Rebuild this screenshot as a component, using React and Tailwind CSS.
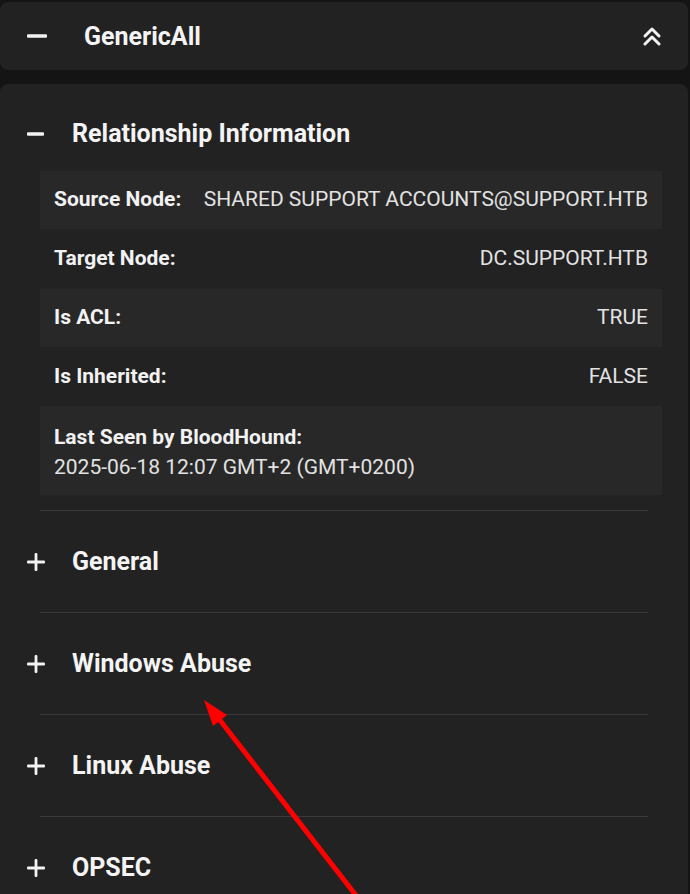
import React from 'react';

const Minus = ({ w = 20 }) => (
  <svg width={w} height="4" viewBox={`0 0 ${w} 4`} className="shrink-0">
    <rect x="0" y="0.3" width={w} height="3.4" rx="1" fill="#f2f2f2" />
  </svg>
);

const Plus = () => (
  <svg width="18" height="18" viewBox="0 0 18 18" className="shrink-0">
    <rect x="0" y="7.6" width="18" height="2.8" rx="1" fill="#f2f2f2" />
    <rect x="7.6" y="0" width="2.8" height="18" rx="1" fill="#f2f2f2" />
  </svg>
);

const ChevronsUp = () => (
  <svg width="20" height="20" viewBox="0 0 20 20" fill="none" className="shrink-0">
    <polyline points="3,10 10,3 17,10" stroke="#f2f2f2" strokeWidth="3" strokeLinecap="round" strokeLinejoin="round" />
    <polyline points="3,18 10,11 17,18" stroke="#f2f2f2" strokeWidth="3" strokeLinecap="round" strokeLinejoin="round" />
  </svg>
);

const rows = [
  { label: 'Source Node:', value: 'SHARED SUPPORT ACCOUNTS@SUPPORT.HTB', h: 'h-[58px]', shade: true },
  { label: 'Target Node:', value: 'DC.SUPPORT.HTB', h: 'h-[60px]', shade: false },
  { label: 'Is ACL:', value: 'TRUE', h: 'h-[58px]', shade: true },
  { label: 'Is Inherited:', value: 'FALSE', h: 'h-[59px]', shade: false },
];

const sections = ['General', 'Windows Abuse', 'Linux Abuse', 'OPSEC'];

const App = () => {
  return (
    <div className="relative min-h-[894px] overflow-hidden bg-[#141414] pt-[2px] pr-[2px] font-['Roboto',sans-serif] text-[#e8e8e8]">
      {/* edge title */}
      <div className="flex h-[68px] items-center rounded-lg bg-[#222222] pl-[27px] pr-[26px]">
        <Minus w={20} />
        <span className="ml-[37px] text-[25px] font-bold leading-none text-[#f4f4f4]">GenericAll</span>
        <div className="ml-auto">
          <ChevronsUp />
        </div>
      </div>

      <div className="mt-[14px] rounded-lg bg-[#222222] pb-[40px]">
        <div className="flex items-center pl-[27px] pt-[36px] pb-[23px] leading-[28px]">
          <Minus w={17} />
          <span className="ml-[28px] text-[25px] font-bold text-[#f4f4f4]">Relationship Information</span>
        </div>

        <div className="ml-[40px] mr-[26px] text-[21px]">
          {rows.map(r => (
            <div key={r.label} className={`flex items-center justify-between px-[14px] ${r.h} ${r.shade ? 'bg-[#282828]' : ''}`}>
              <span className="font-bold text-[#f2f2f2]">{r.label}</span>
              <span className="text-[#e2e2e2]">{r.value}</span>
            </div>
          ))}
          <div className="bg-[#282828] px-[14px] pt-[16px] pb-[13px] leading-[30px]">
            <div className="font-bold text-[#f2f2f2]">Last Seen by BloodHound:</div>
            <div className="text-[#e2e2e2]">2025-06-18 12:07 GMT+2 (GMT+0200)</div>
          </div>
        </div>

        <div className="mt-[15px]">
          {sections.map(s => (
            <div key={s}>
              <div className="mx-[40px] h-px bg-[#3a3a3a]" />
              <div className="flex h-[101px] items-center pl-[27px]">
                <Plus />
                <span className="ml-[27px] text-[25px] font-bold text-[#f4f4f4]">{s}</span>
              </div>
            </div>
          ))}
        </div>
      </div>

      {/* red annotation arrow */}
      <svg className="pointer-events-none absolute left-0 top-0" width="690" height="894" viewBox="0 0 690 894">
        <line x1="219" y1="719" x2="358" y2="898" stroke="#ff0000" strokeWidth="5" />
        <polygon points="204,700 213,726 227,715" fill="#ff0000" />
      </svg>
    </div>
  );
};

export default App;
